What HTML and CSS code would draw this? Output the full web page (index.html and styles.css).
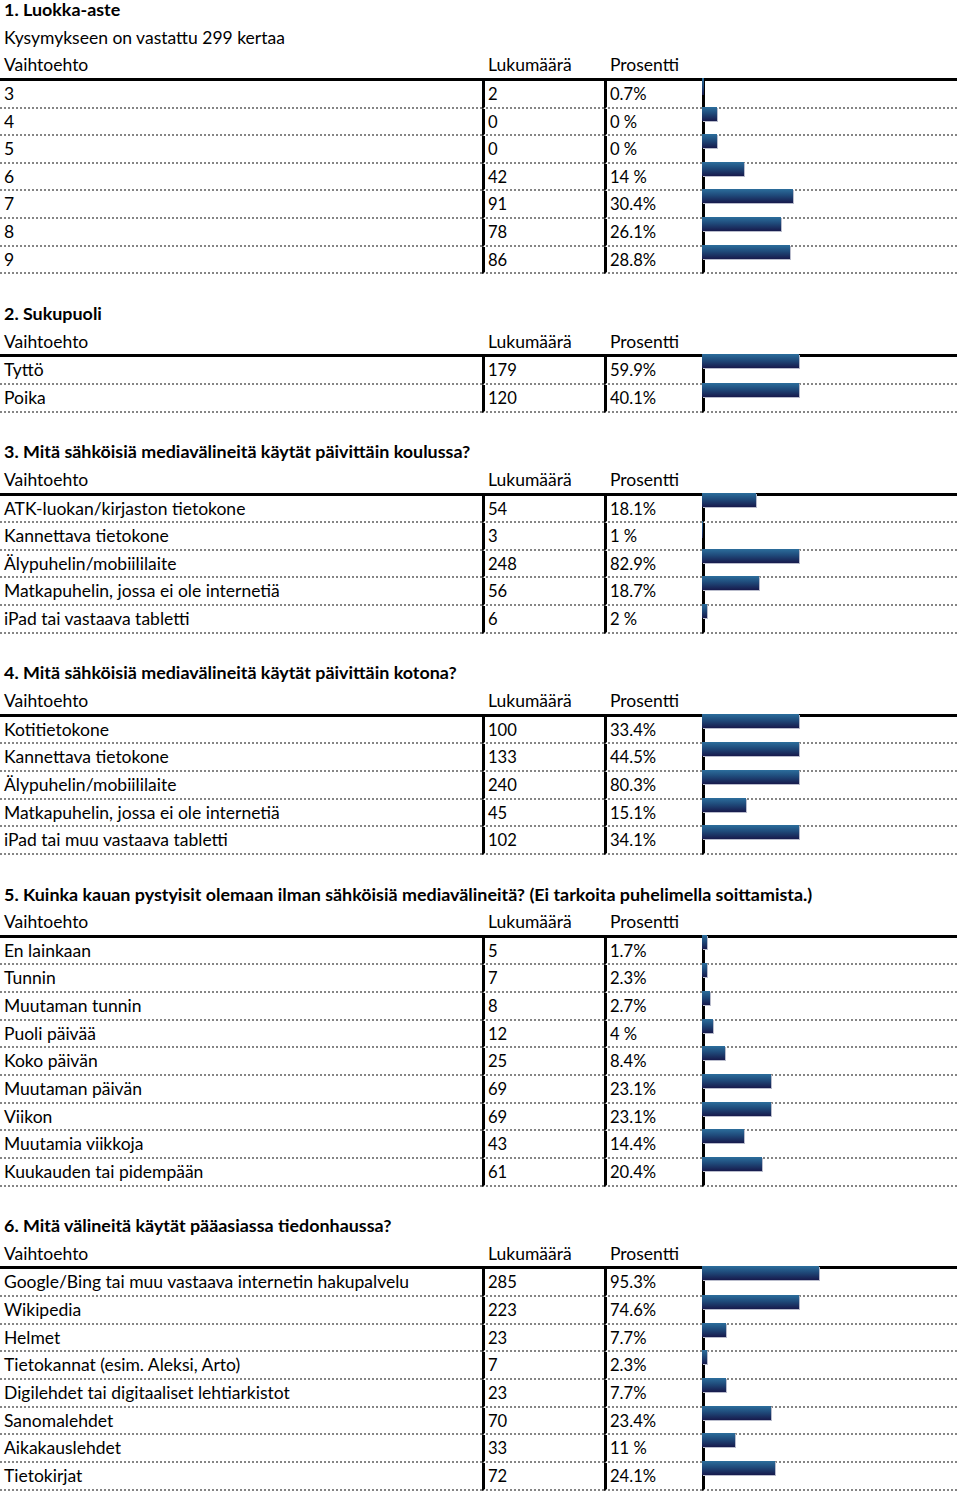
FILE: index.html
```html
<!DOCTYPE html>
<html lang="fi">
<head>
<meta charset="utf-8">
<title>Kysely</title>
<link rel="stylesheet" href="styles.css">
</head>
<body>
<div class="page">

<section class="q">
  <h2 class="q-title">1. Luokka-aste</h2>
  <p class="q-note">Kysymykseen on vastattu 299 kertaa</p>
  <div class="row head"><div class="c-label">Vaihtoehto</div><div class="c-count">Lukumäärä</div><div class="c-pct">Prosentti</div><div class="c-bar"></div></div>
  <div class="row"><div class="c-label">3</div><div class="c-count">2</div><div class="c-pct">0.7%</div><div class="c-bar"><span class="bar thin" style="width:2px"></span></div></div>
  <div class="row"><div class="c-label">4</div><div class="c-count">0</div><div class="c-pct">0 %</div><div class="c-bar"><span class="bar" style="width:15px"></span></div></div>
  <div class="row"><div class="c-label">5</div><div class="c-count">0</div><div class="c-pct">0 %</div><div class="c-bar"><span class="bar" style="width:15px"></span></div></div>
  <div class="row"><div class="c-label">6</div><div class="c-count">42</div><div class="c-pct">14 %</div><div class="c-bar"><span class="bar" style="width:42px"></span></div></div>
  <div class="row"><div class="c-label">7</div><div class="c-count">91</div><div class="c-pct">30.4%</div><div class="c-bar"><span class="bar" style="width:91px"></span></div></div>
  <div class="row"><div class="c-label">8</div><div class="c-count">78</div><div class="c-pct">26.1%</div><div class="c-bar"><span class="bar" style="width:79px"></span></div></div>
  <div class="row"><div class="c-label">9</div><div class="c-count">86</div><div class="c-pct">28.8%</div><div class="c-bar"><span class="bar" style="width:88px"></span></div></div>
</section>

<section class="q">
  <h2 class="q-title">2. Sukupuoli</h2>
  <div class="row head"><div class="c-label">Vaihtoehto</div><div class="c-count">Lukumäärä</div><div class="c-pct">Prosentti</div><div class="c-bar"></div></div>
  <div class="row"><div class="c-label">Tyttö</div><div class="c-count">179</div><div class="c-pct">59.9%</div><div class="c-bar"><span class="bar" style="width:97px"></span></div></div>
  <div class="row"><div class="c-label">Poika</div><div class="c-count">120</div><div class="c-pct">40.1%</div><div class="c-bar"><span class="bar" style="width:97px"></span></div></div>
</section>

<section class="q">
  <h2 class="q-title">3. Mitä sähköisiä mediavälineitä käytät päivittäin koulussa?</h2>
  <div class="row head"><div class="c-label">Vaihtoehto</div><div class="c-count">Lukumäärä</div><div class="c-pct">Prosentti</div><div class="c-bar"></div></div>
  <div class="row"><div class="c-label">ATK-luokan/kirjaston tietokone</div><div class="c-count">54</div><div class="c-pct">18.1%</div><div class="c-bar"><span class="bar" style="width:54px"></span></div></div>
  <div class="row"><div class="c-label">Kannettava tietokone</div><div class="c-count">3</div><div class="c-pct">1 %</div><div class="c-bar"><span class="bar thin" style="width:1px"></span></div></div>
  <div class="row"><div class="c-label">Älypuhelin/mobiililaite</div><div class="c-count">248</div><div class="c-pct">82.9%</div><div class="c-bar"><span class="bar" style="width:97px"></span></div></div>
  <div class="row"><div class="c-label">Matkapuhelin, jossa ei ole internetiä</div><div class="c-count">56</div><div class="c-pct">18.7%</div><div class="c-bar"><span class="bar" style="width:57px"></span></div></div>
  <div class="row"><div class="c-label">iPad tai vastaava tabletti</div><div class="c-count">6</div><div class="c-pct">2 %</div><div class="c-bar"><span class="bar" style="width:5px"></span></div></div>
</section>

<section class="q">
  <h2 class="q-title">4. Mitä sähköisiä mediavälineitä käytät päivittäin kotona?</h2>
  <div class="row head"><div class="c-label">Vaihtoehto</div><div class="c-count">Lukumäärä</div><div class="c-pct">Prosentti</div><div class="c-bar"></div></div>
  <div class="row"><div class="c-label">Kotitietokone</div><div class="c-count">100</div><div class="c-pct">33.4%</div><div class="c-bar"><span class="bar" style="width:97px"></span></div></div>
  <div class="row"><div class="c-label">Kannettava tietokone</div><div class="c-count">133</div><div class="c-pct">44.5%</div><div class="c-bar"><span class="bar" style="width:97px"></span></div></div>
  <div class="row"><div class="c-label">Älypuhelin/mobiililaite</div><div class="c-count">240</div><div class="c-pct">80.3%</div><div class="c-bar"><span class="bar" style="width:97px"></span></div></div>
  <div class="row"><div class="c-label">Matkapuhelin, jossa ei ole internetiä</div><div class="c-count">45</div><div class="c-pct">15.1%</div><div class="c-bar"><span class="bar" style="width:44px"></span></div></div>
  <div class="row"><div class="c-label">iPad tai muu vastaava tabletti</div><div class="c-count">102</div><div class="c-pct">34.1%</div><div class="c-bar"><span class="bar" style="width:97px"></span></div></div>
</section>

<section class="q">
  <h2 class="q-title">5. Kuinka kauan pystyisit olemaan ilman sähköisiä mediavälineitä? (Ei tarkoita puhelimella soittamista.)</h2>
  <div class="row head"><div class="c-label">Vaihtoehto</div><div class="c-count">Lukumäärä</div><div class="c-pct">Prosentti</div><div class="c-bar"></div></div>
  <div class="row"><div class="c-label">En lainkaan</div><div class="c-count">5</div><div class="c-pct">1.7%</div><div class="c-bar"><span class="bar" style="width:5px"></span></div></div>
  <div class="row"><div class="c-label">Tunnin</div><div class="c-count">7</div><div class="c-pct">2.3%</div><div class="c-bar"><span class="bar" style="width:5px"></span></div></div>
  <div class="row"><div class="c-label">Muutaman tunnin</div><div class="c-count">8</div><div class="c-pct">2.7%</div><div class="c-bar"><span class="bar" style="width:8px"></span></div></div>
  <div class="row"><div class="c-label">Puoli päivää</div><div class="c-count">12</div><div class="c-pct">4 %</div><div class="c-bar"><span class="bar" style="width:11px"></span></div></div>
  <div class="row"><div class="c-label">Koko päivän</div><div class="c-count">25</div><div class="c-pct">8.4%</div><div class="c-bar"><span class="bar" style="width:23px"></span></div></div>
  <div class="row"><div class="c-label">Muutaman päivän</div><div class="c-count">69</div><div class="c-pct">23.1%</div><div class="c-bar"><span class="bar" style="width:69px"></span></div></div>
  <div class="row"><div class="c-label">Viikon</div><div class="c-count">69</div><div class="c-pct">23.1%</div><div class="c-bar"><span class="bar" style="width:69px"></span></div></div>
  <div class="row"><div class="c-label">Muutamia viikkoja</div><div class="c-count">43</div><div class="c-pct">14.4%</div><div class="c-bar"><span class="bar" style="width:42px"></span></div></div>
  <div class="row"><div class="c-label">Kuukauden tai pidempään</div><div class="c-count">61</div><div class="c-pct">20.4%</div><div class="c-bar"><span class="bar" style="width:60px"></span></div></div>
</section>

<section class="q">
  <h2 class="q-title">6. Mitä välineitä käytät pääasiassa tiedonhaussa?</h2>
  <div class="row head"><div class="c-label">Vaihtoehto</div><div class="c-count">Lukumäärä</div><div class="c-pct">Prosentti</div><div class="c-bar"></div></div>
  <div class="row"><div class="c-label">Google/Bing tai muu vastaava internetin hakupalvelu</div><div class="c-count">285</div><div class="c-pct">95.3%</div><div class="c-bar"><span class="bar" style="width:117px"></span></div></div>
  <div class="row"><div class="c-label">Wikipedia</div><div class="c-count">223</div><div class="c-pct">74.6%</div><div class="c-bar"><span class="bar" style="width:97px"></span></div></div>
  <div class="row"><div class="c-label">Helmet</div><div class="c-count">23</div><div class="c-pct">7.7%</div><div class="c-bar"><span class="bar" style="width:24px"></span></div></div>
  <div class="row"><div class="c-label">Tietokannat (esim. Aleksi, Arto)</div><div class="c-count">7</div><div class="c-pct">2.3%</div><div class="c-bar"><span class="bar" style="width:5px"></span></div></div>
  <div class="row"><div class="c-label">Digilehdet tai digitaaliset lehtiarkistot</div><div class="c-count">23</div><div class="c-pct">7.7%</div><div class="c-bar"><span class="bar" style="width:24px"></span></div></div>
  <div class="row"><div class="c-label">Sanomalehdet</div><div class="c-count">70</div><div class="c-pct">23.4%</div><div class="c-bar"><span class="bar" style="width:69px"></span></div></div>
  <div class="row"><div class="c-label">Aikakauslehdet</div><div class="c-count">33</div><div class="c-pct">11 %</div><div class="c-bar"><span class="bar" style="width:33px"></span></div></div>
  <div class="row"><div class="c-label">Tietokirjat</div><div class="c-count">72</div><div class="c-pct">24.1%</div><div class="c-bar"><span class="bar" style="width:73px"></span></div></div>
</section>

</div>
</body>
</html>
```

FILE: styles.css
```css
html, body {
  margin: 0;
  padding: 0;
  background: #fff;
}

body {
  font-family: Lato, "Open Sans", "Liberation Sans", sans-serif;
  font-size: 17.5px;
  color: #000;
}

.page {
  width: 957px;
  margin-top: -2px;
}

.q {
  margin-bottom: 27.65px;
}

.q-title,
.q-note {
  margin: 0;
  height: 27.65px;
  line-height: 23px;
  padding-left: 4px;
  font-size: 17.5px;
  white-space: nowrap;
}

.q-title {
  font-weight: 700;
  font-size: 17.9px;
}

.q-note {
  font-weight: 400;
}

.row {
  display: grid;
  grid-template-columns: 482px 122px 98px 255px;
  height: 27.65px;
}

.row > div {
  box-sizing: border-box;
  height: 27.65px;
  line-height: 26px;
  white-space: nowrap;
  border-bottom: 2px dotted #858585;
}

.row.head > div {
  line-height: 24px;
  border-bottom: 3px solid #000;
}

.c-label {
  padding-left: 4px;
}

.c-count,
.c-pct {
  padding-left: 3px;
}

.row:not(.head) .c-count,
.row:not(.head) .c-pct {
  font-size: 16.6px;
}

.row:not(.head) .c-count,
.row:not(.head) .c-pct,
.row:not(.head) .c-bar {
  border-left: 3px solid #000;
}

.row.head .c-count,
.row.head .c-pct {
  padding-left: 6px;
}

.bar {
  display: block;
  height: 14px;
  margin-top: -2px;
  margin-left: -3px;
  background: linear-gradient(to bottom, #2c6e9c 0%, #1f4a7a 45%, #171a4c 100%);
  box-shadow: 1px 1px 0 #b9bccc;
}

.head + .row .bar {
  margin-top: -3px;
}

.bar.thin {
  height: 17px;
  box-shadow: none;
}
```
